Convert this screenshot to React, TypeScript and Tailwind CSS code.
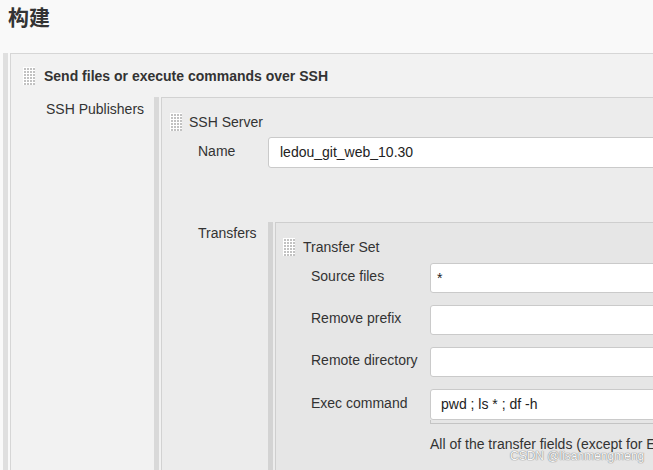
import type { ReactNode } from 'react'

const dotRows = [0, 1, 2, 3, 4, 5]
const dotCols = [0, 1, 2, 3]

function Grip() {
    return (
        <svg width="12" height="18" viewBox="0 0 12 18" className="shrink-0">
            <rect width="12" height="18" fill="#fff" />
            {dotRows.map((r) =>
                dotCols.map((c) => (
                    <rect key={`${r}-${c}`} x={1 + c * 3} y={1 + r * 3} width="2" height="2" fill="#c2c2c2" />
                ))
            )}
        </svg>
    )
}

interface PanelProps {
    barClass: string
    boxClass: string
    children: ReactNode
}

function Panel({ barClass, boxClass, children }: PanelProps) {
    return (
        <div className="flex flex-1">
            <div className={`w-[5px] shrink-0 ${barClass}`} />
            <div className={`ml-[2px] flex-1 border-l border-t ${boxClass}`}>{children}</div>
        </div>
    )
}

function Field({ value, padClass, heightClass }: { value: string; padClass: string; heightClass: string }) {
    return (
        <div
            className={`flex flex-1 items-center rounded-[3px] border border-[#cacaca] bg-white text-[14px] text-[#222] ${padClass} ${heightClass}`}
        >
            {value}
        </div>
    )
}

const transferRows = [
    { label: 'Source files', value: '*', pad: 'pl-[6px]' },
    { label: 'Remove prefix', value: '', pad: 'pl-[6px]' },
    { label: 'Remote directory', value: '', pad: 'pl-[6px]' },
]

export default function App() {
    return (
        <div className="relative h-[470px] w-[653px] overflow-hidden bg-[#f9f9f9] font-['Liberation_Sans',Arial,sans-serif] text-[14px] text-[#333]">
            <div className="h-[53px] pl-[8px] pt-[4px]">
                <h1 className="font-['Noto_Sans_CJK_SC',sans-serif] text-[21px] font-bold leading-[24px] text-[#333]">
                    构建
                </h1>
            </div>

            <div className="flex w-[860px] pl-[3px]">
                <Panel barClass="bg-[#dfdfdf]" boxClass="border-[#d6d6d6] bg-[#f2f2f2]">
                    <div className="mt-[13px] flex h-[18px] items-center pl-[12px]">
                        <Grip />
                        <span className="ml-[9px] font-bold leading-[17px]">Send files or execute commands over SSH</span>
                    </div>

                    <div className="mt-[12px] flex">
                        <div className="w-[143px] shrink-0 pl-[35px] pt-[4px] leading-[17px]">SSH Publishers</div>
                        <Panel barClass="bg-[#d9d9d9]" boxClass="border-[#d2d2d2] bg-[#ececec]">
                            <div className="mt-[15px] flex h-[18px] items-center pl-[8px]">
                                <Grip />
                                <span className="ml-[7px] leading-[17px]">SSH Server</span>
                            </div>

                            <div className="mt-[6px] flex">
                                <div className="w-[106px] shrink-0 pl-[36px] pt-[6px] leading-[17px]">Name</div>
                                <Field value="ledou_git_web_10.30" padClass="pl-[11px]" heightClass="h-[31px]" />
                            </div>

                            <div className="mt-[54px] flex">
                                <div className="w-[106px] shrink-0 pl-[36px] pt-[3px] leading-[17px]">Transfers</div>
                                <Panel barClass="bg-[#d3d3d3]" boxClass="border-[#cecece] bg-[#e6e6e6]">
                                    <div className="mt-[15px] flex h-[18px] items-center pl-[7px]">
                                        <Grip />
                                        <span className="ml-[8px] leading-[17px]">Transfer Set</span>
                                    </div>

                                    <div className="mt-[7px] flex flex-col gap-[12px]">
                                        {transferRows.map((row) => (
                                            <div key={row.label} className="flex">
                                                <div className="w-[154px] shrink-0 pl-[35px] pt-[5px] leading-[17px]">
                                                    {row.label}
                                                </div>
                                                <Field value={row.value} padClass={row.pad} heightClass="h-[30px]" />
                                            </div>
                                        ))}
                                        <div className="flex">
                                            <div className="w-[154px] shrink-0 pl-[35px] pt-[6px] leading-[17px]">
                                                Exec command
                                            </div>
                                            <div className="flex-1">
                                                <div className="flex">
                                                    <Field value="pwd ; ls * ; df -h" padClass="pl-[10px]" heightClass="h-[31px]" />
                                                </div>
                                                <div className="h-[4px] border-b border-l border-[#c4c4c4]" />
                                            </div>
                                        </div>
                                    </div>

                                    <p className="mt-[12px] whitespace-nowrap pl-[154px] leading-[17px]">
                                        All of the transfer fields (except for Exec timeout) support substitution of Jenkins
                                        environment variables
                                    </p>
                                    <div className="h-[60px]" />
                                </Panel>
                            </div>
                        </Panel>
                    </div>
                </Panel>
            </div>

            <span className="absolute left-[510px] top-[449px] font-['Liberation_Sans',Arial,sans-serif] text-[12px] leading-[15px] text-[#f8f8f8] [text-shadow:0_0_1px_#7a7a7a,0_0_1px_#7a7a7a]">
                CSDN @lisanmengmeng
            </span>
        </div>
    )
}
